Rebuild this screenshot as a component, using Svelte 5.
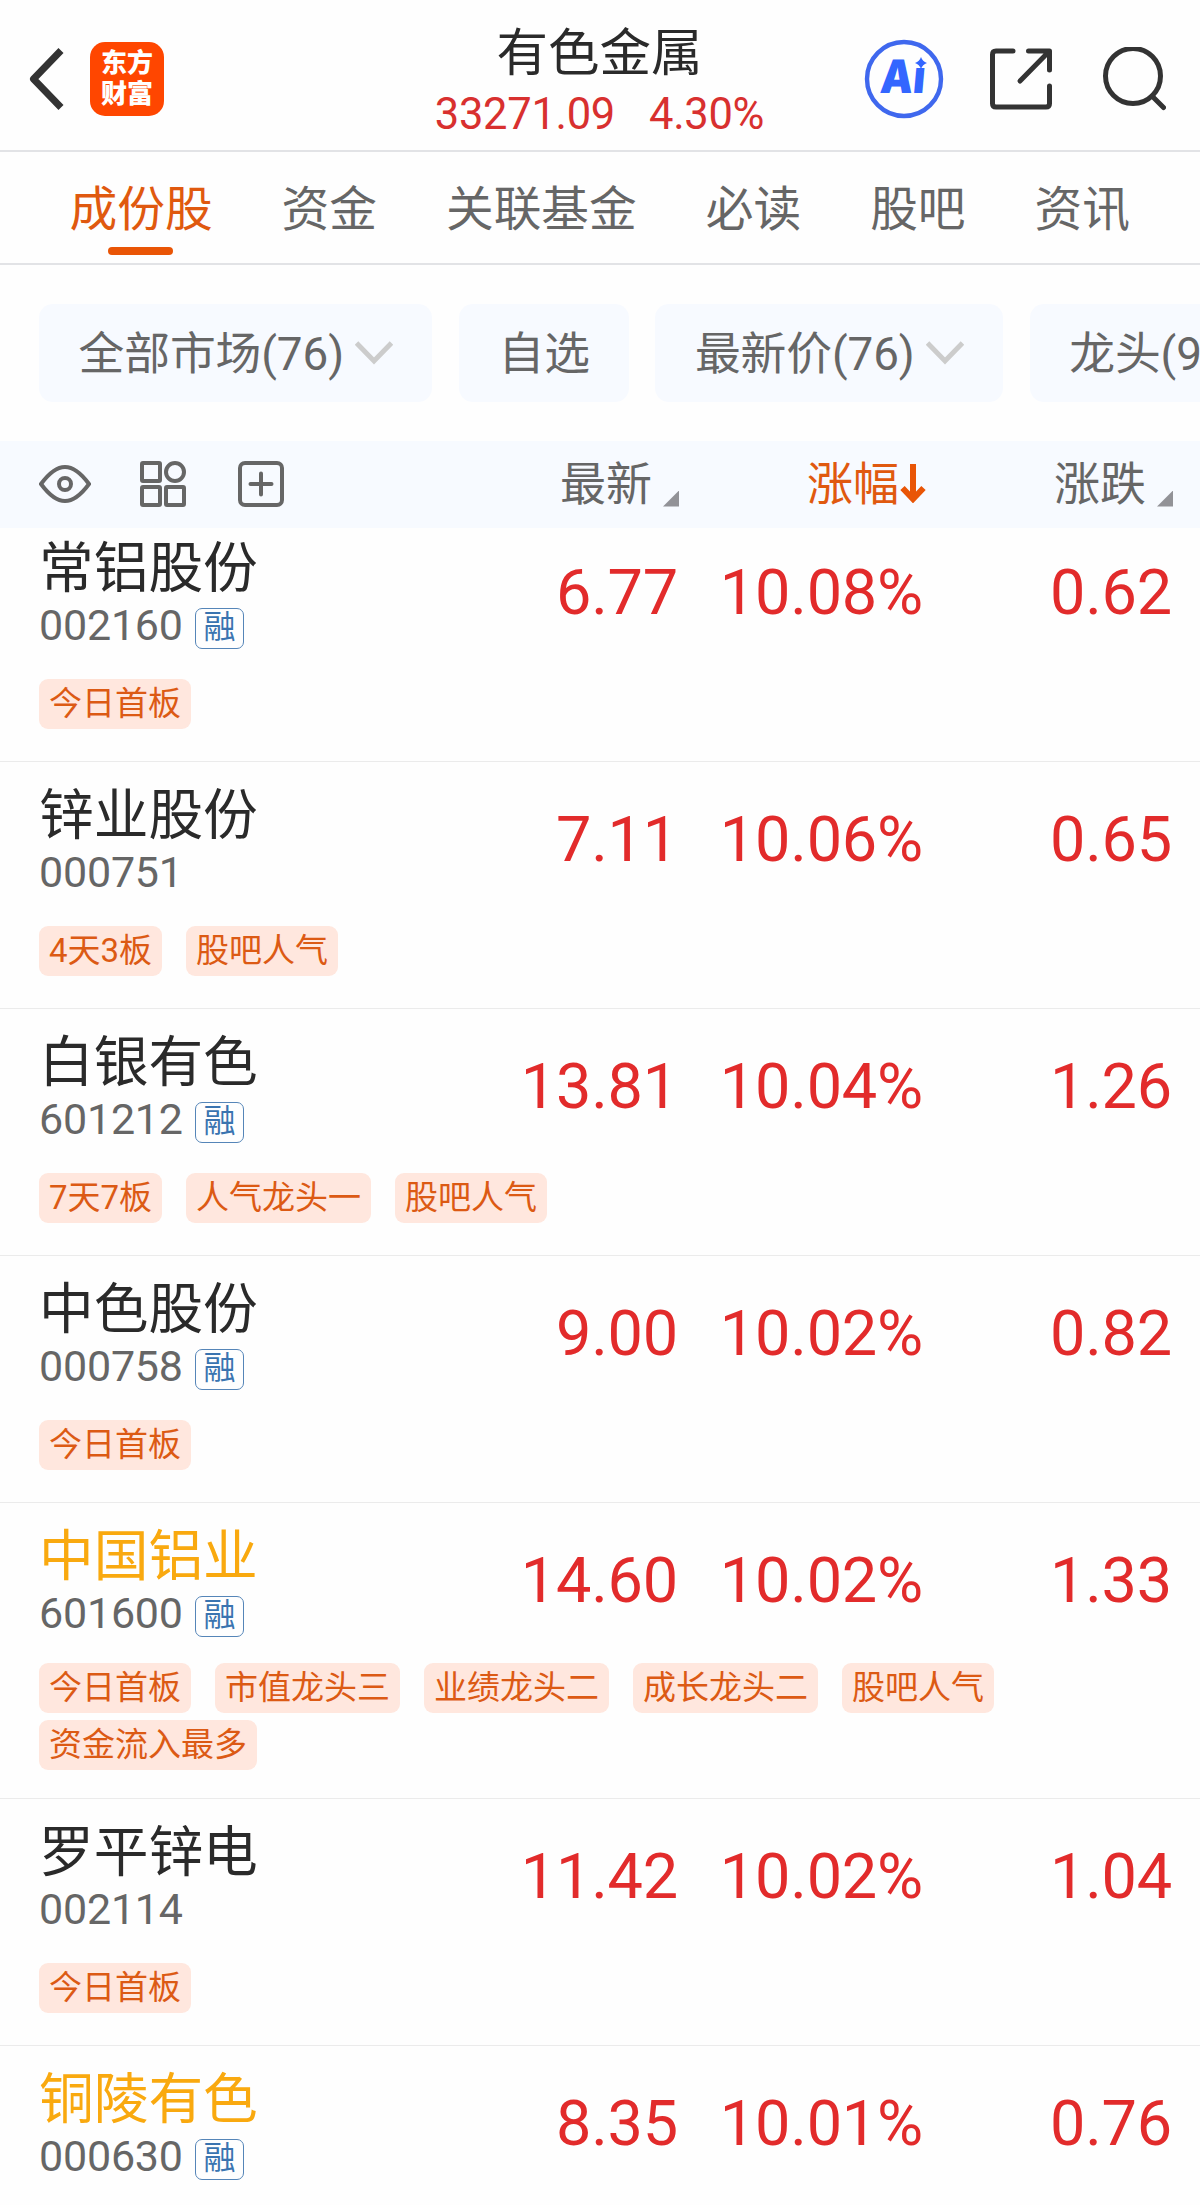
<script lang="ts">
    interface Stock {
        name: string;
        code: string;
        margin: boolean;
        held?: boolean;
        price: string;
        percent: string;
        change: string;
        tags: string[];
    }

    const tabs = ['成份股', '资金', '关联基金', '必读', '股吧', '资讯'];
    let activeTab = $state('成份股');

    const filters = [
        { label: '全部市场(76)', dropdown: true },
        { label: '自选', dropdown: false },
        { label: '最新价(76)', dropdown: true },
        { label: '龙头(9', dropdown: false }
    ];

    const stocks: Stock[] = [
        { name: '常铝股份', code: '002160', margin: true, price: '6.77', percent: '10.08%', change: '0.62', tags: ['今日首板'] },
        { name: '锌业股份', code: '000751', margin: false, price: '7.11', percent: '10.06%', change: '0.65', tags: ['4天3板', '股吧人气'] },
        { name: '白银有色', code: '601212', margin: true, price: '13.81', percent: '10.04%', change: '1.26', tags: ['7天7板', '人气龙头一', '股吧人气'] },
        { name: '中色股份', code: '000758', margin: true, price: '9.00', percent: '10.02%', change: '0.82', tags: ['今日首板'] },
        { name: '中国铝业', code: '601600', margin: true, held: true, price: '14.60', percent: '10.02%', change: '1.33', tags: ['今日首板', '市值龙头三', '业绩龙头二', '成长龙头二', '股吧人气', '资金流入最多'] },
        { name: '罗平锌电', code: '002114', margin: false, price: '11.42', percent: '10.02%', change: '1.04', tags: ['今日首板'] },
        { name: '铜陵有色', code: '000630', margin: true, held: true, price: '8.35', percent: '10.01%', change: '0.76', tags: [] }
    ];
</script>

<div class="page">
    <header>
        <div class="left">
            <svg class="back" width="36" height="66" viewBox="0 0 36 66">
                <path d="M32 4.500 L4.500 33 L32 61.500" />
            </svg>
            <div class="logo"><span>东方</span><span>财富</span></div>
        </div>
        <div class="title">
            <h1>有色金属</h1>
            <div class="index"><span>33271.09</span><span>4.30%</span></div>
        </div>
        <div class="actions">
            <svg width="80" height="80" viewBox="0 0 80 80">
                <circle cx="40" cy="40" r="37" fill="none" stroke="#3f68ee" stroke-width="4.4" />
                <text class="ai" x="15" y="54.500" textLength="45" lengthAdjust="spacingAndGlyphs" transform="translate(5 0) skewX(-5)">Aı</text>
                <path d="M57 18 Q58.500 22.500 63 24 Q58.500 25.500 57 30 Q55.500 25.500 51 24 Q55.500 22.500 57 18Z" fill="#3366ff" />
            </svg>
            <svg class="line share" width="64" height="64" viewBox="0 0 64 64">
                <path d="M24 4 H7 Q3.500 4 3.500 7.500 V56.500 Q3.500 60 7 60 H57 Q60.500 60 60.500 56.500 V39" />
                <path d="M39.500 4 H60.500 V23 M60 4.500 L31 34" />
            </svg>
            <svg class="line search" width="64" height="64" viewBox="0 0 64 64">
                <circle cx="31" cy="29" r="27.500" />
                <path d="M50 49 L61.500 60.500" />
            </svg>
        </div>
    </header>

    <nav>
        {#each tabs as tab}
            <button class="tab" class:active={tab === activeTab} onclick={() => (activeTab = tab)}>{tab}</button>
        {/each}
    </nav>

    <div class="filters">
        {#each filters as filter}
            <button class="chip">
                <span>{filter.label}</span>
                {#if filter.dropdown}
                    <svg width="38" height="24" viewBox="0 0 38 24">
                        <path d="M1.500 2 L19 20 L36.500 2" />
                    </svg>
                {/if}
            </button>
        {/each}
    </div>

    <div class="table-head">
        <div class="tools">
            <svg width="52" height="46" viewBox="0 0 52 46">
                <path d="M2 23 C9 13.500 17 6 26 6 S43 13.500 50 23 C43 32.500 35 40 26 40 S9 32.500 2 23Z" />
                <circle cx="26" cy="23" r="6" />
            </svg>
            <svg width="46" height="46" viewBox="0 0 46 46">
                <rect x="2" y="2" width="18" height="18" rx="1" />
                <circle cx="35" cy="11" r="9" />
                <rect x="2" y="26" width="18" height="18" rx="1" />
                <rect x="26" y="26" width="18" height="18" rx="1" />
            </svg>
            <svg width="46" height="46" viewBox="0 0 46 46">
                <rect x="2" y="2" width="42" height="42" rx="5" />
                <path d="M12.500 23 H33.500 M23 12.500 V33.500" />
            </svg>
        </div>
        <div class="col"><span>最新</span><i class="corner"></i></div>
        <div class="col sorted">
            <span>涨幅</span>
            <svg width="26" height="40" viewBox="0 0 26 40">
                <path d="M13 1 V36 M2.500 25 L13 36 L23.500 25" />
            </svg>
        </div>
        <div class="col"><span>涨跌</span><i class="corner"></i></div>
    </div>

    <main>
        {#each stocks as stock}
            <section class="stock">
                <div class="quote">
                    <div class="info">
                        <div class="name" class:held={stock.held}>{stock.name}</div>
                        <div class="code">
                            {stock.code}
                            {#if stock.margin}<span class="badge">融</span>{/if}
                        </div>
                    </div>
                    <div class="value">{stock.price}</div>
                    <div class="value percent">{stock.percent}</div>
                    <div class="value">{stock.change}</div>
                </div>
                <div class="tags">
                    {#each stock.tags as tag}
                        <span class="tag">{tag}</span>
                    {/each}
                </div>
            </section>
        {/each}
    </main>
</div>

<style>
    :global(body) {
        margin: 0;
        background: #fefefe;
    }

    .page {
        width: 1200px;
        height: 2205px;
        overflow: hidden;
        background: #fefefe;
        color: #2a2a2a;
        font-family: Roboto, 'Noto Sans CJK SC', sans-serif;
    }

    svg {
        display: block;
        flex: none;
        fill: none;
    }

    button {
        border: none;
        background: none;
        padding: 0;
        font-family: inherit;
        white-space: nowrap;
    }

    header {
        box-sizing: border-box;
        height: 152px;
        display: grid;
        grid-template-columns: 1fr auto 1fr;
        padding: 0 34px 0 29px;
        border-bottom: 2px solid #e2e3e6;
    }

    .left {
        display: flex;
        align-items: center;
        gap: 25px;
        padding-top: 7px;
    }

    .back path {
        stroke: #333;
        stroke-width: 7;
        stroke-linejoin: round;
    }

    .logo {
        width: 74px;
        height: 74px;
        border-radius: 15px;
        background: #ff4600;
        color: #fff;
        font-size: 26px;
        font-weight: 900;
        line-height: 31px;
        display: flex;
        flex-direction: column;
        align-items: center;
        justify-content: center;
    }

    .title {
        text-align: center;
        padding: 24px 0 0 4px;
    }

    h1 {
        margin: 0;
        font-size: 51.5px;
        font-weight: 400;
        line-height: 60px;
    }

    .index {
        display: flex;
        justify-content: center;
        gap: 34px;
        font-size: 43.5px;
        line-height: 61px;
        letter-spacing: -0.3px;
        color: #d8302f;
    }

    .actions {
        display: flex;
        align-items: center;
        justify-content: flex-end;
        padding-top: 7px;
    }

    .ai {
        font-family: Inter, Roboto, sans-serif;
        font-size: 46px;
        font-weight: 900;
        fill: #3366ff;
    }

    .line {
        stroke: #333;
        stroke-width: 5;
        stroke-linecap: round;
        stroke-linejoin: round;
    }

    .share {
        margin-left: 45px;
    }

    .search {
        margin-left: 49px;
    }

    nav {
        box-sizing: border-box;
        height: 113px;
        display: flex;
        gap: 69px;
        padding-left: 69.5px;
        border-bottom: 2px solid #e2e3e6;
    }

    .tab {
        position: relative;
        font-size: 47.7px;
        line-height: 116px;
        height: 111px;
        color: #666;
    }

    .tab.active {
        color: #e0590f;
    }

    .tab.active::after {
        content: '';
        position: absolute;
        left: 50%;
        bottom: 8px;
        width: 65px;
        height: 8px;
        margin-left: -33px;
        border-radius: 4px;
        background: #e95506;
    }

    .filters {
        display: flex;
        gap: 26.5px;
        padding: 39px 0 39px 39px;
        overflow: hidden;
    }

    .chip {
        flex: none;
        display: flex;
        align-items: center;
        gap: 11.5px;
        height: 98px;
        padding: 0 39px 0 39.5px;
        border-radius: 14px;
        background: #f7faff;
        color: #666;
        font-size: 45.8px;
        letter-spacing: -0.1px;
    }

    .chip span {
        line-height: 46px;
        padding-top: 3px;
    }

    .chip path {
        stroke: #ccc;
        stroke-width: 5;
    }

    .table-head {
        height: 87px;
        display: grid;
        grid-template-columns: 394px 246px 247px 247px;
        align-items: center;
        padding-left: 39px;
        background: #f7faff;
        color: #666;
        font-size: 46px;
    }

    .tools {
        display: flex;
        gap: 52.5px;
        padding-bottom: 2px;
    }

    .tools svg:first-child {
        margin-right: -4px;
    }

    .tools svg {
        stroke: #666;
        stroke-width: 4;
        stroke-linecap: round;
    }

    .col {
        display: flex;
        align-items: center;
        justify-content: flex-end;
    }

    .col span {
        line-height: 46px;
        padding-bottom: 1px;
    }

    .corner {
        width: 16px;
        height: 16px;
        margin: 28px 0 0 11px;
        background: #929297;
        clip-path: polygon(100% 0, 100% 100%, 0 100%);
    }

    .sorted {
        color: #e0590f;
    }

    .sorted svg {
        margin: 0 0 3px 1px;
    }

    .sorted path {
        stroke: #e95506;
        stroke-width: 6;
    }

    main {
        overflow: hidden;
    }

    .stock {
        padding: 23px 27px 28px 39px;
        border-bottom: 1px solid #ebebeb;
    }

    /* the list is scrolled a little under the table head */
    .stock:first-child {
        margin-top: -13px;
    }

    .quote {
        display: grid;
        grid-template-columns: 394px 246px 247px 247px;
    }

    .name {
        font-size: 54.7px;
        line-height: 60px;
    }

    .held {
        color: #f9a90f;
    }

    .code {
        display: flex;
        align-items: center;
        height: 52px;
        gap: 12px;
        padding-top: 1px;
        margin-bottom: -1px;
        font-size: 43px;
        letter-spacing: -0.2px;
        color: #666;
    }

    .badge {
        box-sizing: border-box;
        width: 49px;
        height: 41px;
        margin-top: 7px;
        border: 1.5px solid #5585b8;
        border-radius: 7px;
        font-size: 32px;
        line-height: 37px;
        text-align: center;
        color: #3a74b0;
    }

    .value {
        margin-top: 23px;
        padding-right: 1px;
        font-size: 63px;
        line-height: 64px;
        text-align: right;
        letter-spacing: -0.2px;
        color: #e22b2b;
    }

    .percent {
        padding-right: 3px;
    }

    .tags {
        display: flex;
        flex-wrap: wrap;
        align-content: center;
        gap: 7px 24px;
        min-height: 58px;
        margin-top: 25px;
    }

    .tag {
        height: 50px;
        padding: 0 10px;
        border-radius: 9px;
        background: #ffe7de;
        color: #dc5a14;
        font-size: 33px;
        line-height: 50px;
    }
</style>
